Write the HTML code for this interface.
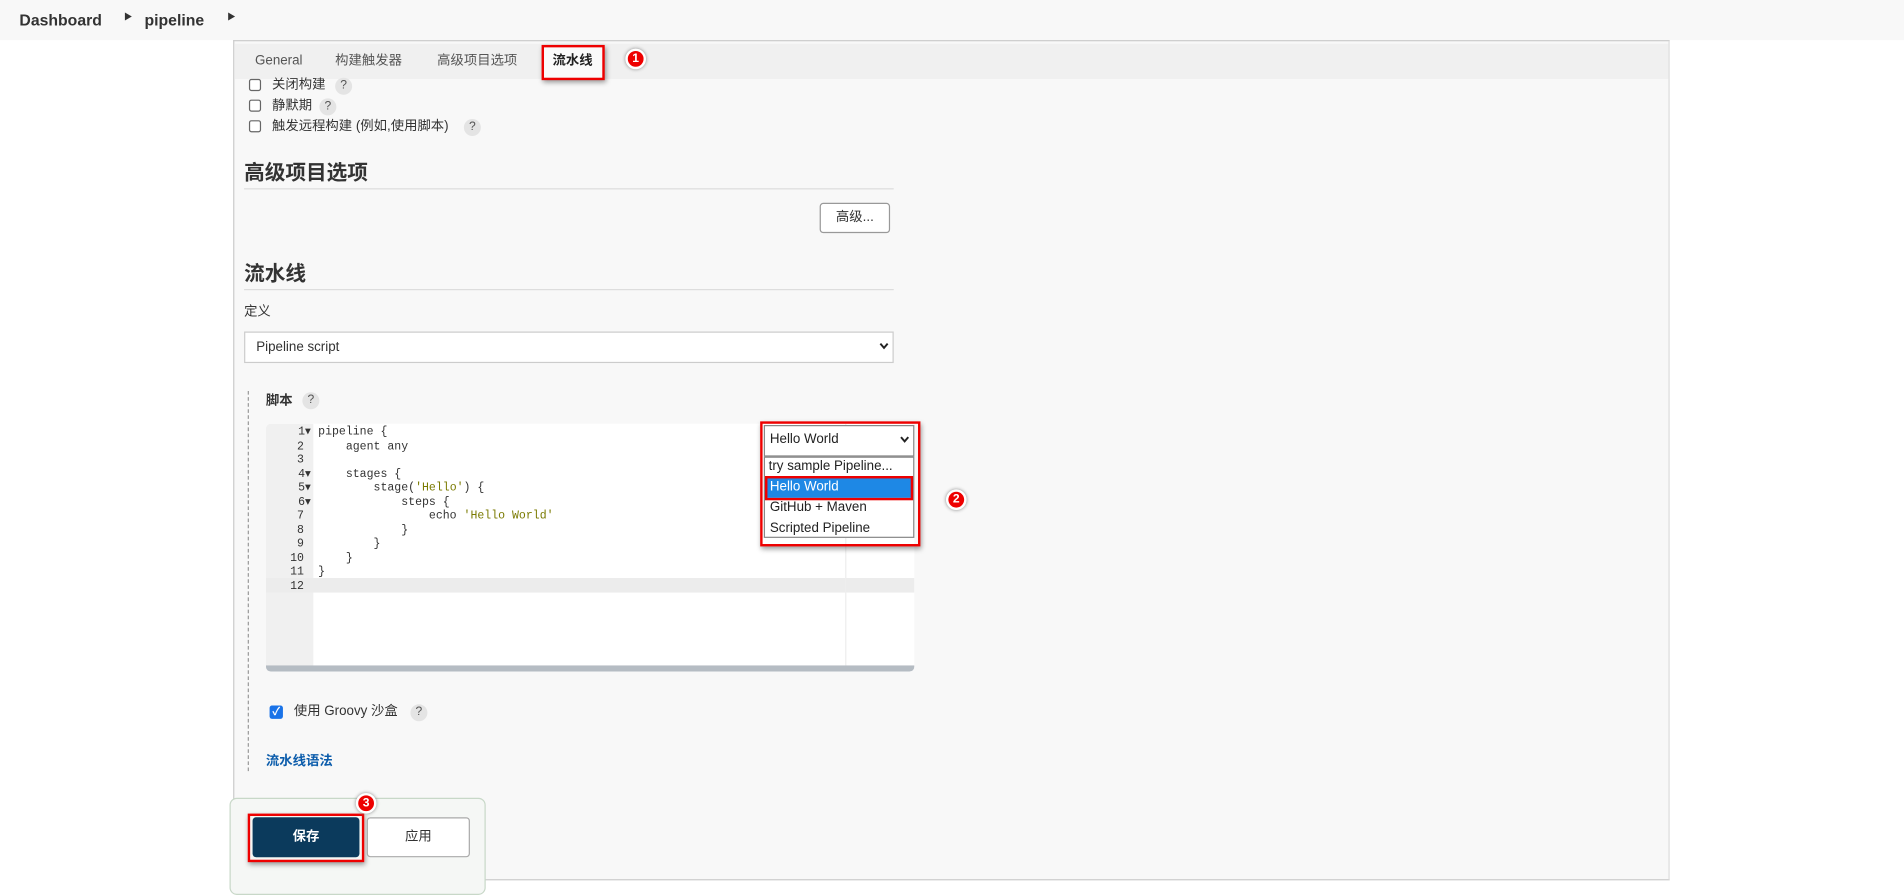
<!DOCTYPE html>
<html><head><meta charset="utf-8"><style>
*{box-sizing:border-box;margin:0;padding:0}
html,body{width:1904px;height:882px;overflow:hidden;background:#fff}
#w{position:absolute;left:0;top:0;width:1568px;height:727px;transform:scale(1.2143);transform-origin:0 0;font-family:"Liberation Sans","Noto Sans CJK SC",sans-serif;font-size:11px;line-height:1.2;color:#333}
.a{position:absolute;white-space:nowrap}
.q{position:absolute;width:14px;height:14px;border-radius:7px;background:#e4e4e4;color:#555;font-size:10px;text-align:center;line-height:14px}
.cb{position:absolute;width:10px;height:10px;border:1px solid #666;border-radius:2px;background:#fff}
.badge{position:absolute;width:17px;height:17px;border-radius:9px;background:#e00;border:2px solid #fff;box-shadow:0 0 3px #888;color:#fff;font-size:10px;font-weight:bold;text-align:center;line-height:13px}
.red{position:absolute;border:2px solid #e00;box-shadow:1px 2px 4px rgba(0,0,0,.4)}
.code{position:absolute;font-family:"Liberation Mono",monospace;font-size:9.5px;line-height:11.5px;white-space:pre}
</style></head><body><div id="w">
<div class="a" style="left:0;top:0;width:1568px;height:33px;background:#f8f8f8"></div>
<div class="a" style="left:16px;top:9px;font-size:13px;font-weight:bold;color:#333">Dashboard</div>
<div class="a" style="left:102px;top:11px;font-size:7px">&#9654;</div>
<div class="a" style="left:119px;top:9px;font-size:13px;font-weight:bold;color:#333">pipeline</div>
<div class="a" style="left:187px;top:11px;font-size:7px">&#9654;</div>
<div class="a" style="left:192px;top:33px;width:1183px;height:692px;background:#f8f8f8;border:1px solid #ccc;border-right-color:#ddd"></div>
<div class="a" style="left:193px;top:36px;width:1181px;height:29px;background:#f0f0f0"></div>
<div class="a" style="left:210px;top:44px;color:#555">General</div>
<div class="a" style="left:276px;top:44px;color:#555">构建触发器</div>
<div class="a" style="left:360px;top:44px;color:#555">高级项目选项</div>
<div class="a" style="left:446px;top:37px;width:51px;height:28px;background:#fafafa"></div>
<div class="a" style="left:455px;top:44px;font-weight:bold;color:#222">流水线</div>
<div class="red" style="left:446px;top:37px;width:52px;height:29px"></div>
<div class="badge" style="left:515px;top:40px">1</div>
<div class="cb" style="left:205px;top:65px"></div><div class="a" style="left:224px;top:64px">关闭构建</div><div class="q" style="left:276px;top:64px">?</div>
<div class="cb" style="left:205px;top:82px"></div><div class="a" style="left:224px;top:81px">静默期</div><div class="q" style="left:263px;top:81px">?</div>
<div class="cb" style="left:205px;top:99px"></div><div class="a" style="left:224px;top:98px">触发远程构建 (例如,使用脚本)</div><div class="q" style="left:382px;top:98px">?</div>
<div class="a" style="left:201px;top:133px;font-size:17px;font-weight:bold;color:#333">高级项目选项</div>
<div class="a" style="left:201px;top:155px;width:535px;height:1px;background:#ddd"></div>
<div class="a" style="left:675px;top:167px;width:58px;height:25px;border:1px solid #999;border-radius:3px;background:#fff;text-align:center;line-height:23px;color:#333">高级...</div>
<div class="a" style="left:201px;top:216px;font-size:17px;font-weight:bold;color:#333">流水线</div>
<div class="a" style="left:201px;top:238px;width:535px;height:1px;background:#ddd"></div>
<div class="a" style="left:201px;top:251px">定义</div>
<div class="a" style="left:201px;top:273px;width:535px;height:26px;border:1px solid #ccc;background:#fff"></div>
<div class="a" style="left:211px;top:280px">Pipeline script</div>
<svg class="a" style="left:724px;top:282px" width="8" height="6"><path d="M1 1L4 4.5L7 1" fill="none" stroke="#222" stroke-width="1.6"/></svg>
<div class="a" style="left:204px;top:322px;width:0;height:313px;border-left:1px dashed #999"></div>
<div class="a" style="left:219px;top:324px;font-weight:bold">脚本</div><div class="q" style="left:249px;top:323px">?</div>
<div class="a" style="left:219px;top:349px;width:534px;height:204px;background:#fff;border-radius:4px;overflow:hidden">
 <div class="a" style="left:0;top:0;width:39px;height:204px;background:#f0f0f0"></div>
 <div class="a" style="left:0;top:127px;width:534px;height:12px;background:#ececec"></div>
 <div class="a" style="left:477px;top:0;width:1px;height:199px;background:#eee"></div>
 <div class="a" style="left:0;top:199px;width:534px;height:5px;background:#b5bcc3"></div>
 <div class="code" style="left:0;top:1px;width:37px;text-align:right;color:#333">1&#9662;
2 
3 
4&#9662;
5&#9662;
6&#9662;
7 
8 
9 
10 
11 
12 </div>
 <div class="code" style="left:43px;top:1px;color:#333">pipeline {
    agent any

    stages {
        stage(<span style="color:#7a7a00">'Hello'</span>) {
            steps {
                echo <span style="color:#7a7a00">'Hello World'</span>
            }
        }
    }
}
</div>
</div>
<div class="a" style="left:629px;top:350px;width:124px;height:26px;border:1px solid #888;background:#fff"></div>
<div class="a" style="left:634px;top:356px;color:#222">Hello World</div>
<svg class="a" style="left:741px;top:359px" width="8" height="6"><path d="M1 1L4 4.5L7 1" fill="none" stroke="#222" stroke-width="1.6"/></svg>
<div class="a" style="left:629px;top:376px;width:124px;height:67px;border:1px solid #888;background:#fff"></div>
<div class="a" style="left:633px;top:378px;color:#222">try sample Pipeline...</div>
<div class="a" style="left:631px;top:393px;width:120px;height:17px;background:#1e88e5"></div>
<div class="a" style="left:634px;top:395px;color:#fff">Hello World</div>
<div class="a" style="left:634px;top:412px;color:#222">GitHub + Maven</div>
<div class="a" style="left:634px;top:429px;color:#222">Scripted Pipeline</div>
<div class="red" style="left:626px;top:347px;width:132px;height:103px"></div>
<div class="red" style="left:630px;top:392px;width:122px;height:20px;box-shadow:none"></div>
<div class="badge" style="left:779px;top:403px">2</div>
<div class="a" style="left:222px;top:581px;width:11px;height:11px;background:#1a73e8;border-radius:2px;color:#fff;font-size:9px;line-height:11px;text-align:center;font-weight:bold">&#10003;</div>
<div class="a" style="left:242px;top:580px">使用 Groovy 沙盒</div><div class="q" style="left:338px;top:580px">?</div>
<div class="a" style="left:219px;top:621px;color:#0b5cab;font-weight:bold">流水线语法</div>
<div class="a" style="left:189px;top:657px;width:211px;height:80px;background:#f5f7f5;border:1px solid #c8d8c8;border-radius:6px"></div>
<div class="a" style="left:208px;top:673px;width:88px;height:33px;background:#0b3a5c;border-radius:3px;color:#fff;font-weight:bold;text-align:center;line-height:33px">保存</div>
<div class="red" style="left:204px;top:670px;width:96px;height:40px"></div>
<div class="a" style="left:302px;top:673px;width:85px;height:33px;background:#fff;border:1px solid #aaa;border-radius:3px;color:#333;text-align:center;line-height:31px">应用</div>
<div class="badge" style="left:293px;top:653px">3</div>
</div></body></html>
